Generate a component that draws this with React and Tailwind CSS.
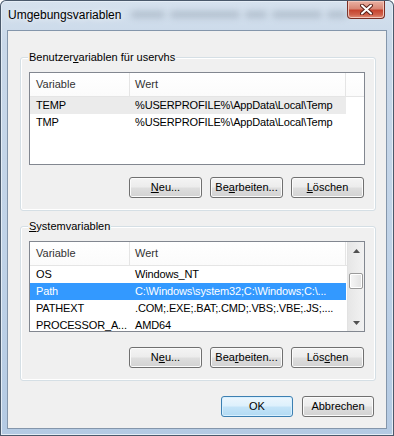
import React from 'react';

// Windows 7 "Umgebungsvariablen" dialog.
const font = { fontFamily: '"Liberation Sans", Arial, sans-serif' };

const Btn = ({ children, def, wide = true }) => (
  <div
    className={`h-[21px] flex items-center justify-center rounded-[3px] border text-[11px] text-black ${wide ? 'w-[73px]' : 'w-[72px]'} ${
      def
        ? 'border-[#3c7fb1] bg-[linear-gradient(to_bottom,#ecf6fd_0%,#ddf0fc_48%,#c4e4f8_52%,#b2daf3_100%)] shadow-[inset_0_0_0_1px_#d8f0ff]'
        : 'border-[#707070] bg-[linear-gradient(to_bottom,#f4f4f4_0%,#ececec_48%,#dedede_52%,#d2d2d2_100%)] shadow-[inset_0_0_0_1px_#fbfbfb]'
    }`}
  >
    {children}
  </div>
);

const Arrow = ({ down }) => (
  <svg width="7" height="4" viewBox="0 0 7 4">
    {down ? <path d="M0 0h7L3.5 4z" fill="#505050" /> : <path d="M0 4h7L3.5 0z" fill="#505050" />}
  </svg>
);

const Row = ({ name, value, sel }) => (
  <div
    className={`flex h-[17px] w-[316px] items-center whitespace-nowrap text-[11px] tracking-[-0.15px] ${
      sel === 'focus' ? 'bg-[#3399ff] text-white' : sel === 'gray' ? 'bg-[#ebebeb] text-black' : 'text-black'
    }`}
  >
    <div className="w-[100px] overflow-hidden pl-[6px]">{name}</div>
    <div className="w-[216px] overflow-hidden pl-[5px]">{value}</div>
  </div>
);

const Header = () => (
  <div className="flex h-[24px] border-b border-[#e5e5e5] bg-[linear-gradient(to_bottom,#ffffff,#fbfbfb)] text-[11px] text-[#333]">
    <div className="flex w-[100px] items-center border-r border-[#e5e5e5] pl-[6px]">Variable</div>
    <div className="flex w-[216px] items-center border-r border-[#e5e5e5] pl-[5px]">Wert</div>
    <div className="flex-1" />
  </div>
);

const Group = ({ label, children, className }) => (
  <div className={`ml-[12px] mr-[10px] rounded-[3px] border border-[#d5dfe5] pb-[12px] shadow-[inset_0_0_0_1px_#ffffff] ${className}`}>
    <div className="-mt-[8px] ml-[7px] w-fit bg-[#f0f0f0] px-[1px] text-[11px] leading-[14px] text-black">{label}</div>
    {children}
  </div>
);

const ButtonRow = ({ a, b, c, className }) => (
  <div className={`mr-[11px] flex justify-end gap-[8px] ${className}`}>
    <Btn>{a}</Btn>
    <Btn>{b}</Btn>
    <Btn>{c}</Btn>
  </div>
);

export default function App() {
  return (
    <div
      style={font}
      className="h-[436px] w-[394px] overflow-hidden rounded-t-[6px] bg-[linear-gradient(to_bottom,#d6e2ee_0%,#c9d8e9_10%,#bfd2e7_60%,#b4cae3_100%)] shadow-[inset_0_0_0_1px_#4a596b,inset_0_0_0_2px_#e4edf6]"
    >
      {/* title bar, with the blurred window behind the glass */}
      <div className="flex h-[30px] items-start">
        <div className="pl-[8px] pt-[7px] text-[12px] leading-[16px] text-black [text-shadow:0_0_6px_#ffffff]">
          Umgebungsvariablen
        </div>
        <div className="flex flex-1 items-center gap-[5px] pl-[10px] pt-[11px] opacity-40">
          <div className="h-[7px] w-[34px] rounded-full bg-[#8593a3] blur-[3px]" />
          <div className="h-[7px] w-[70px] rounded-full bg-[#8593a3] blur-[3px]" />
          <div className="h-[7px] w-[22px] rounded-full bg-[#8593a3] blur-[3px]" />
          <div className="h-[7px] w-[50px] rounded-full bg-[#8593a3] blur-[3px]" />
          <div className="h-[7px] w-[20px] rounded-full bg-[#8593a3] blur-[3px]" />
        </div>
        <div className="mr-[9px] mt-[1px] flex h-[18px] w-[45px] items-center justify-center rounded-b-[4px] border border-t-0 border-[#7a2e24] bg-[linear-gradient(to_bottom,#eab1a3_0%,#d98876_45%,#c6442f_55%,#d0604a_80%,#e3927b_100%)] shadow-[inset_0_0_0_1px_#f3c6ba]">
          <svg width="13" height="11" viewBox="0 0 13 11">
            <path d="M2 1.5L11 9.5M11 1.5L2 9.5" stroke="#5a2018" strokeWidth="4" strokeLinecap="round" />
            <path d="M2 1.5L11 9.5M11 1.5L2 9.5" stroke="#ffffff" strokeWidth="2" strokeLinecap="round" />
          </svg>
        </div>
      </div>

      {/* client area */}
      <div className="ml-[7px] flex h-[399px] w-[380px] flex-col border border-[#8496ab] bg-[#f0f0f0]">
        <Group
          className="mt-[26px]"
          label={
            <>
              Benutzer<u>v</u>ariablen für uservhs
            </>
          }
        >
          <div className="ml-[8px] mr-[10px] mt-[8px] h-[93px] overflow-hidden border border-[#828790] bg-white">
            <Header />
            <Row name="TEMP" value="%USERPROFILE%\AppData\Local\Temp" sel="gray" />
            <Row name="TMP" value="%USERPROFILE%\AppData\Local\Temp" />
          </div>
          <ButtonRow
            className="mt-[12px]"
            a={<><u>N</u>eu...</>}
            b={<>Be<u>a</u>rbeiten...</>}
            c={<><u>L</u>öschen</>}
          />
        </Group>

        <Group
          className="mt-[15px]"
          label={
            <>
              <u>S</u>ystemvariablen
            </>
          }
        >
          <div className="ml-[8px] mr-[10px] mt-[8px] flex h-[91px] overflow-hidden border border-[#828790] bg-white">
            <div className="flex-1 overflow-hidden">
              <Header />
              <Row name="OS" value="Windows_NT" />
              <Row name="Path" value="C:\Windows\system32;C:\Windows;C:\..." sel="focus" />
              <Row name="PATHEXT" value=".COM;.EXE;.BAT;.CMD;.VBS;.VBE;.JS;...." />
              <Row name="PROCESSOR_A..." value="AMD64" />
            </div>
            <div className="flex w-[17px] flex-col border-l border-[#e2e2e2] bg-[linear-gradient(to_right,#e6e6e6,#f2f2f2)]">
              <div className="flex h-[17px] items-center justify-center">
                <Arrow />
              </div>
              <div className="h-[14px]" />
              <div className="mx-[1px] h-[16px] rounded-[2px] border border-[#9a9a9a] bg-[linear-gradient(to_right,#f6f6f6,#e2e2e2)] shadow-[inset_0_0_0_1px_#ffffff]" />
              <div className="flex-1" />
              <div className="flex h-[17px] items-center justify-center">
                <Arrow down />
              </div>
            </div>
          </div>
          <ButtonRow
            className="mt-[15px]"
            a={<>N<u>e</u>u...</>}
            b={<>Bea<u>r</u>beiten...</>}
            c={<>Lös<u>c</u>hen</>}
          />
        </Group>

        <div className="mr-[12px] mt-[15px] flex justify-end gap-[9px]">
          <Btn def wide={false}>OK</Btn>
          <Btn wide={false}>Abbrechen</Btn>
        </div>
      </div>
    </div>
  );
}
